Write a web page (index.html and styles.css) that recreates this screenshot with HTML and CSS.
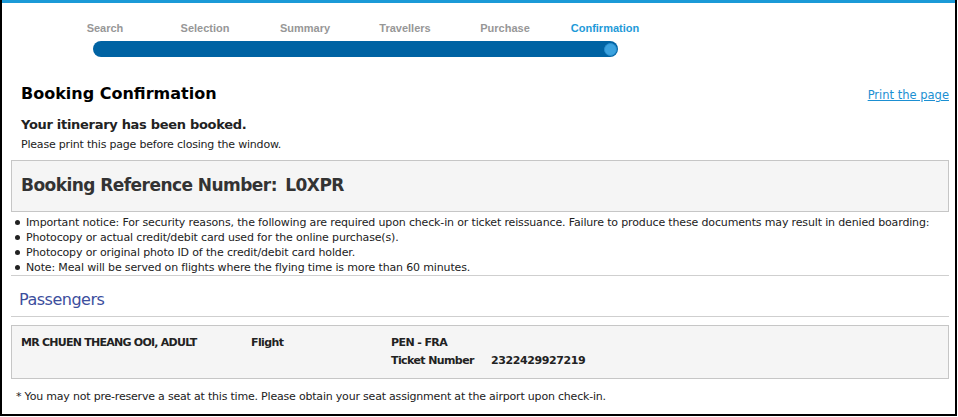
FILE: index.html
```html
<!DOCTYPE html>
<html lang="en">
<head>
<meta charset="utf-8">
<title>Booking Confirmation</title>
<link rel="stylesheet" href="styles.css">
</head>
<body>
<div class="frame">
  <div class="topbar"></div>
  <div class="steps">
    <div class="step-labels">
      <span class="step">Search</span>
      <span class="step">Selection</span>
      <span class="step">Summary</span>
      <span class="step">Travellers</span>
      <span class="step">Purchase</span>
      <span class="step active">Confirmation</span>
    </div>
    <div class="progress"><span class="dot"></span></div>
  </div>
  <div class="content">
    <div class="title-row">
      <h1 class="title">Booking Confirmation</h1>
      <a class="print-link" href="#">Print the page</a>
    </div>
    <p class="booked">Your itinerary has been booked.</p>
    <p class="hint">Please print this page before closing the window.</p>
    <div class="ref-box">
      <span class="ref-text">Booking Reference Number: <span class="ref-code">L0XPR</span></span>
    </div>
    <ul class="notices">
      <li>Important notice: For security reasons, the following are required upon check-in or ticket reissuance. Failure to produce these documents may result in denied boarding:</li>
      <li>Photocopy or actual credit/debit card used for the online purchase(s).</li>
      <li>Photocopy or original photo ID of the credit/debit card holder.</li>
      <li>Note: Meal will be served on flights where the flying time is more than 60 minutes.</li>
    </ul>
    <h2 class="section-title">Passengers</h2>
    <div class="pax-box">
      <div class="pax-name">MR CHUEN THEANG OOI, ADULT</div>
      <div class="pax-flight">Flight</div>
      <div class="pax-detail">
        <div class="route">PEN - FRA</div>
        <div class="ticket"><span class="ticket-label">Ticket Number</span><span class="ticket-no">2322429927219</span></div>
      </div>
    </div>
    <p class="footnote">* You may not pre-reserve a seat at this time. Please obtain your seat assignment at the airport upon check-in.</p>
  </div>
</div>
</body>
</html>
```
FILE: styles.css
```css
* { box-sizing: border-box; }
html, body { margin: 0; padding: 0; background: #fff; }
body {
  width: 958px;
  height: 417px;
  overflow: hidden;
  font-family: "DejaVu Sans", Verdana, sans-serif;
  color: #333;
}
.frame {
  width: 957px;
  height: 416px;
  border-left: 2px solid #000;
  border-right: 2px solid #000;
  border-bottom: 2px solid #000;
}
.topbar { height: 3px; background: #1b9ad7; }

.steps { padding-top: 17px; }
.step-labels {
  display: flex;
  margin-left: 53px;
  height: 16px;
}
.step {
  width: 100px;
  text-align: center;
  font-family: "Liberation Sans", Arial, sans-serif;
  font-weight: bold;
  font-size: 11px;
  line-height: 16px;
  color: #979797;
}
.step.active { color: #1e9ad8; }
.progress {
  margin: 5px 0 0 91px;
  width: 525px;
  height: 16px;
  border-radius: 8px;
  background: #0063a3;
  display: flex;
  justify-content: flex-end;
  align-items: center;
  padding-right: 1px;
}
.dot {
  width: 13px;
  height: 13px;
  border-radius: 50%;
  background: #3ba2df;
  border: 1px solid #2a8fcf;
}

.content { margin: 0 6px 0 9px; }
.title-row {
  margin-top: 27px;
  display: flex;
  justify-content: space-between;
  align-items: baseline;
  padding-left: 10px;
}
.title {
  margin: 0;
  font-size: 16px;
  line-height: 20px;
  font-weight: bold;
  color: #000;
}
.print-link {
  font-size: 11.5px;
  color: #1b8fd2;
  text-decoration: underline;
}
.booked {
  margin: 12px 0 0;
  padding-left: 10px;
  font-size: 13px;
  line-height: 18px;
  font-weight: bold;
  letter-spacing: -0.3px;
  color: #222;
}
.hint {
  margin: 3px 0 0;
  padding-left: 10px;
  font-size: 11px;
  line-height: 15px;
  letter-spacing: -0.2px;
  color: #222;
}
.ref-box {
  margin-top: 8px;
  background: #f5f5f5;
  border: 1px solid #c6c6c6;
  padding: 12px 9px 14px;
}
.ref-text {
  display: block;
  font-size: 17px;
  line-height: 24px;
  font-weight: bold;
  letter-spacing: -0.55px;
  color: #333;
}
.ref-code { margin-left: 3px; }
.notices {
  list-style: none;
  margin: 3px 0 0;
  padding: 0;
  border-bottom: 1px solid #cfcfcf;
}
.notices li {
  display: flex;
  align-items: center;
  font-size: 11px;
  line-height: 15px;
  letter-spacing: -0.15px;
  color: #222;
  white-space: nowrap;
}
.notices li::before {
  content: "";
  width: 5px;
  height: 5px;
  border-radius: 50%;
  background: #222;
  margin: 0 6px 0 4px;
  flex: none;
}
.section-title {
  margin: 14px 0 0;
  padding: 0 0 6px 8px;
  border-bottom: 1px solid #cfcfcf;
  font-size: 16px;
  line-height: 20px;
  font-weight: normal;
  color: #3c4e9d;
  letter-spacing: -0.5px;
}
.pax-box {
  margin-top: 8px;
  background: #f5f5f5;
  border: 1px solid #c6c6c6;
  padding: 8px 9px;
  display: grid;
  grid-template-columns: 230px 140px auto;
  font-size: 11px;
  line-height: 18px;
  font-weight: bold;
  color: #222;
  letter-spacing: -0.6px;
}
.pax-name { letter-spacing: -0.75px; }
.ticket { display: grid; grid-template-columns: 100px auto; }
.ticket-no { letter-spacing: -0.4px; }
.footnote {
  margin: 10px 0 0;
  padding-left: 5px;
  font-size: 11px;
  line-height: 15px;
  letter-spacing: -0.2px;
  color: #222;
}
```
